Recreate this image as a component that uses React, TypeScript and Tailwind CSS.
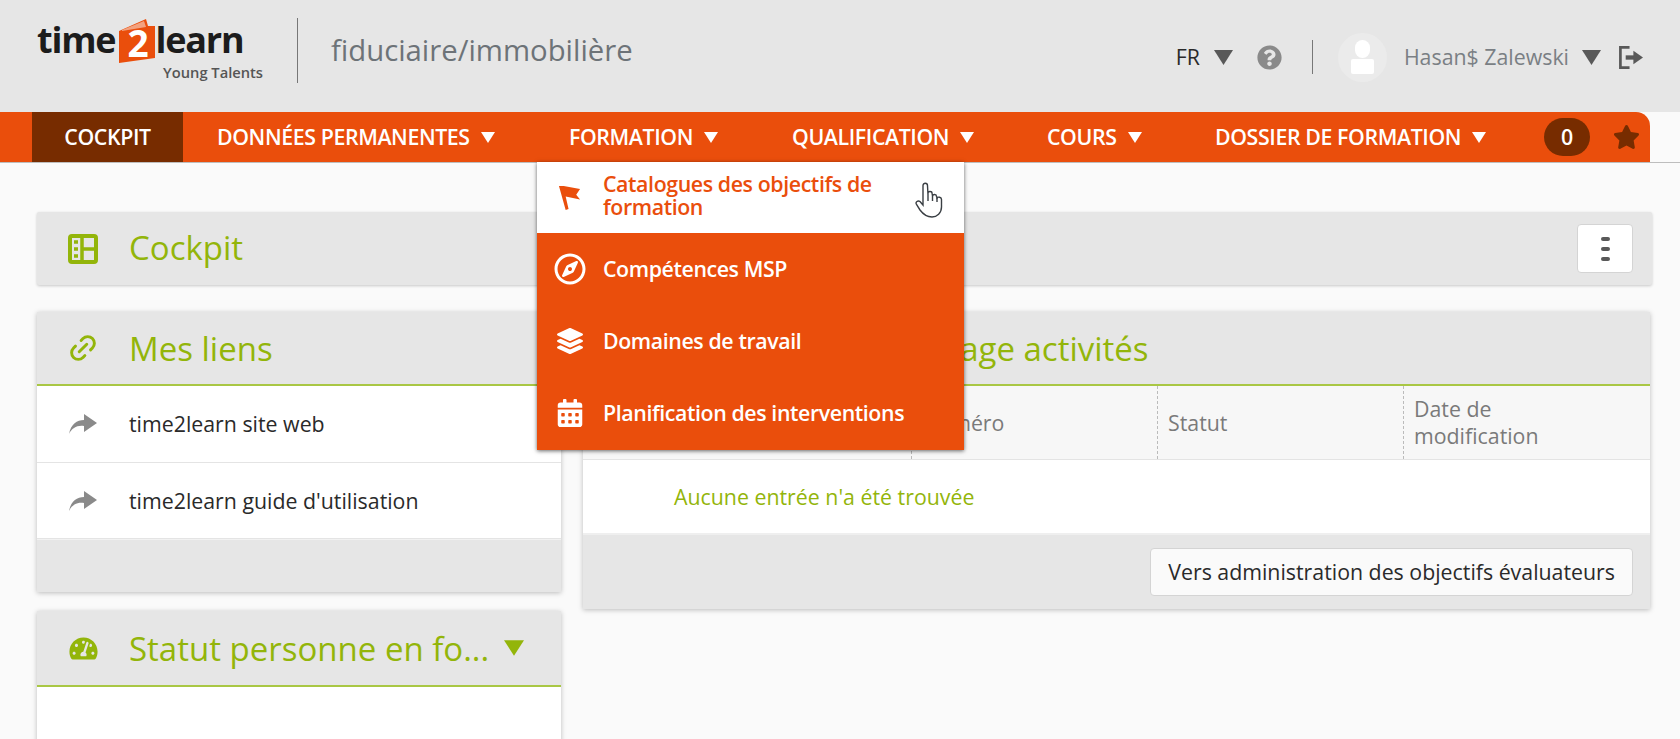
import { FaCalendarAlt, FaLayerGroup, FaQuestionCircle, FaRegCompass, FaStar, FaTachometerAlt } from "react-icons/fa";
import { Link2 } from "lucide-react";

const navItems = [
  { label: "DONNÉES PERMANENTES", width: "w-[353px]", pad: "pl-[34px]" },
  { label: "FORMATION", width: "w-[222px]", pad: "pl-[33px]" },
  { label: "QUALIFICATION", width: "w-[255px]", pad: "pl-[34px]" },
  { label: "COURS", width: "w-[202px]", pad: "pl-[34px]" },
  { label: "DOSSIER DE FORMATION", width: "w-[329px]", pad: "pl-[0px]" },
];

function Caret({ className }: { className: string }) {
  return (
    <svg viewBox="0 0 14 11" className={className} fill="currentColor">
      <path d="M0 0h14L7 11z" />
    </svg>
  );
}

function Logo() {
  return (
    <div className="flex w-[226px] flex-col items-end pt-[16px]">
      <div className="flex h-[47px] items-center self-start text-[36px] font-bold leading-none tracking-[-1.2px] text-[#1c1c1c]">
        <span>time</span>
        <svg viewBox="0 0 38 46" className="ml-[3px] h-[46px] w-[38px]">
          <path d="M1 14 L28 2 L30 9 L37 9 L37 41 L1 46 z" fill="#ea4e0c" />
          <path d="M4 13 L26 4 L28 10 L4 14 z" fill="#f3a27f" />
        </svg>
        <span className="-ml-[34px] mr-[3px] mt-[5px] w-[30px] text-center text-[37px] text-white">2</span>
        <span>learn</span>
      </div>
      <div className="text-[14.7px] font-semibold leading-[18px] text-[#555]">Young Talents</div>
    </div>
  );
}

function CockpitIcon() {
  return (
    <svg viewBox="0 0 30 30" className="h-[30px] w-[30px] text-[#93b50a]" fill="none" stroke="currentColor">
      <rect x="2" y="2" width="26" height="26" rx="2" strokeWidth="4" />
      <path d="M14 2v26M14 15h14" strokeWidth="3.5" />
      <path d="M6 8h4M6 15h4M6 22h4" strokeWidth="3.5" />
    </svg>
  );
}

function LogoutIcon() {
  return (
    <svg viewBox="0 0 26 26" className="h-[25px] w-[25px] text-[#595959]" fill="none" stroke="currentColor" strokeWidth="2.8">
      <path d="M12 2.5H2.5v21H12" />
      <path d="M8 13h9" strokeWidth="4.5" />
      <path d="M16 6l10 7-10 7z" fill="currentColor" stroke="none" />
    </svg>
  );
}

function ShareIcon() {
  return (
    <svg viewBox="0 0 28 20" className="h-[20px] w-[28px] text-[#8a8a8a]" fill="currentColor">
      <path d="M0 20C2 10 8 6 15 6V0L28 9L15 18V12C8 11 3 14 0 20z" />
    </svg>
  );
}

function HandCursor() {
  return (
    <svg viewBox="0 0 28 36" className="absolute left-[378px] top-[20px] h-[36px] w-[28px] text-[#3a3f44]" fill="#fff" stroke="currentColor" strokeWidth="1.4">
      <path d="M8 20V3.5C8 .5 12.5 .5 12.5 3.5L13 13V11C13 9 17 9 17 11L17.5 14C18 12 21.5 12 21.5 14.5L22 16C23 14.5 26.5 15 26.5 17.5V25C26.5 31 22 35 17 35C11 35 8 32 5 28L1.5 22.5C0 20 3 18 5 19.5L8 23z" />
      <path d="M13 13V19M17.5 14V19M22 16V20" fill="none" />
    </svg>
  );
}

function PanelHeader({
  icon,
  title,
  trailing,
  slot = "w-[92px]",
  height = "h-[74px]",
}: {
  icon: React.ReactNode;
  title: string;
  trailing?: React.ReactNode;
  slot?: string;
  height?: string;
}) {
  return (
    <div className={`flex items-center border-b-2 border-[#a9c744] bg-[#e6e6e6] ${height}`}>
      <div className={`flex shrink-0 justify-center ${slot}`}>{icon}</div>
      <h2 className="whitespace-nowrap pt-[2px] text-[33px] font-normal leading-[44px] text-[#93b50a]">{title}</h2>
      {trailing}
    </div>
  );
}

function LinkRow({ label, height }: { label: string; height: string }) {
  return (
    <div className={`flex items-center border-b border-[#e4e4e4] bg-white ${height}`}>
      <div className="flex w-[92px] justify-center">
        <ShareIcon />
      </div>
      <span className="text-[21.33px] text-[#2a2a2a]">{label}</span>
    </div>
  );
}

function MenuItem({ icon, label }: { icon: React.ReactNode; label: string }) {
  return (
    <div className="flex h-[72px] items-center text-white">
      <div className="flex w-[66px] shrink-0 justify-center">{icon}</div>
      <span className="text-[21.33px] font-semibold tracking-[-0.4px]">{label}</span>
    </div>
  );
}

export default function App() {
  return (
    <div className="relative h-[739px] overflow-hidden bg-[#fafafa] font-['Open_Sans',sans-serif]">
      <header className="flex h-[112px] bg-[#e6e6e6] pl-[37px]">
        <Logo />
        <div className="ml-[34px] mt-[18px] h-[65px] w-px bg-[#777]" />
        <div className="ml-[33px] mt-[30px] text-[29.3px] leading-[40px] text-[#6d7378]">fiduciaire/immobilière</div>
        <div className="ml-auto mr-[37px] mt-[32px] flex h-[50px] items-center">
          <span className="text-[21.33px] text-[#2a2a2a]">FR</span>
          <Caret className="ml-[14px] h-[15px] w-[19px] text-[#595959]" />
          <FaQuestionCircle className="ml-[24px] h-[25px] w-[25px] text-[#8a8a8a]" />
          <div className="ml-[30px] h-[34px] w-px bg-[#777]" />
          <div className="ml-[25px] flex h-[49px] w-[49px] flex-col items-center justify-center rounded-full bg-[#ebebeb]">
            <div className="h-[18px] w-[15px] rounded-full bg-white" />
            <div className="mt-[1px] h-[15px] w-[23px] rounded-[2px] bg-white" />
          </div>
          <span className="ml-[17px] text-[21.33px] text-[#7a7f84]">Hasan$ Zalewski</span>
          <Caret className="ml-[13px] h-[15px] w-[19px] text-[#595959]" />
          <div className="ml-[17px]"><LogoutIcon /></div>
        </div>
      </header>

      <div className="border-b border-[#bdbdbd]">
        <nav className="flex h-[50px] w-[1650px] items-center rounded-tr-[14px] bg-[#ea4e0c] pl-[32px] text-white">
          <div className="flex h-full w-[151px] items-center justify-center bg-[#772c00] text-[21.33px] font-semibold tracking-[-0.4px]">COCKPIT</div>
          {navItems.map((item) => (
            <div key={item.label} className={`flex h-full items-center ${item.width} ${item.pad}`}>
              <span className="whitespace-nowrap text-[21.33px] font-semibold tracking-[-0.4px]">{item.label}</span>
              <Caret className="ml-[11px] h-[11px] w-[14px]" />
            </div>
          ))}
          <div className="flex h-[38px] w-[46px] items-center justify-center rounded-full bg-[#772c00] text-[21.33px] font-semibold">0</div>
          <FaStar className="ml-[23px] h-[26px] w-[27px] text-[#772c00]" />
        </nav>
      </div>

      <main className="flex flex-col gap-[27px] pl-[37px] pr-[28px] pt-[49px]">
        <section className="flex h-[73px] items-center rounded-[2px] bg-[#e6e6e6] shadow-[0_1px_3px_rgba(0,0,0,0.2)]">
          <div className="flex w-[92px] justify-center"><CockpitIcon /></div>
          <h1 className="pb-[1px] text-[33px] font-normal leading-[44px] text-[#93b50a]">Cockpit</h1>
          <button className="ml-auto mr-[19px] flex h-[49px] w-[56px] flex-col items-center justify-center gap-[6px] rounded-[4px] border border-[#d4d4d4] bg-white">
            <span className="h-[4px] w-[9px] rounded-[2px] bg-[#595959]" />
            <span className="h-[4px] w-[9px] rounded-[2px] bg-[#595959]" />
            <span className="h-[4px] w-[9px] rounded-[2px] bg-[#595959]" />
          </button>
        </section>

        <div className="grid grid-cols-[524px_1067px] gap-x-[22px]">
          <div className="flex flex-col gap-[19px]">
            <section className="shadow-[0_1px_5px_rgba(0,0,0,0.25)]">
              <PanelHeader icon={<Link2 className="h-[32px] w-[32px] -rotate-45 text-[#93b50a]" strokeWidth={2.2} />} title="Mes liens" />
              <LinkRow label="time2learn site web" height="h-[77px]" />
              <LinkRow label="time2learn guide d'utilisation" height="h-[76px]" />
              <div className="h-[53px] border-t border-[#f2f2f2] bg-[#e6e6e6]" />
            </section>
            <section className="shadow-[0_1px_5px_rgba(0,0,0,0.25)]">
              <PanelHeader
                icon={<FaTachometerAlt className="h-[25px] w-[29px] text-[#93b50a]" />}
                title="Statut personne en fo..."
                height="h-[76px]"
                trailing={<Caret className="ml-[15px] h-[16px] w-[20px] shrink-0 text-[#93b50a]" />}
              />
              <div className="h-[200px] bg-white" />
            </section>
          </div>

          <section className="self-start shadow-[0_1px_5px_rgba(0,0,0,0.25)]">
            <PanelHeader icon={<Link2 className="h-[30px] w-[30px] text-[#93b50a]" />} title="Pilotage activités" slot="w-[309px]" />
            <div className="grid h-[74px] grid-cols-[328px_246px_246px_1fr] border-b border-[#e4e4e4] bg-[#f7f7f7] text-[21.33px] leading-[27px] text-[#7a7a7a]">
              <div />
              <div className="flex items-center border-l border-dashed border-[#bbb] pl-[10px]">Numéro</div>
              <div className="flex items-center border-l border-dashed border-[#bbb] pl-[10px]">Statut</div>
              <div className="flex items-center border-l border-dashed border-[#bbb] pb-[2px] pl-[10px]">Date de<br />modification</div>
            </div>
            <div className="flex h-[75px] items-center border-b-2 border-[#efefef] bg-white pl-[91px] text-[21.33px] text-[#93b50a]">Aucune entrée n'a été trouvée</div>
            <div className="flex h-[74px] items-center justify-end bg-[#e6e6e6] pr-[17px]">
              <button className="h-[48px] rounded-[4px] border border-[#d4d4d4] bg-[#fafafa] px-[17px] text-[21.33px] text-[#2a2a2a]">Vers administration des objectifs évaluateurs</button>
            </div>
          </section>
        </div>
      </main>

      <div className="absolute left-[537px] top-[162px] w-[427px] bg-[#ea4e0c] shadow-[0_1px_4px_rgba(0,0,0,0.6)]">
        <div className="relative flex h-[71px] items-center bg-white text-[#ea4e0c]">
          <div className="flex w-[66px] shrink-0 justify-center pr-[2px]">
            <svg viewBox="0 0 24 26" className="h-[25px] w-[23px]" fill="currentColor">
              <path d="M1 1H6L23 4L19 10L23 15L8 12L11 25L8 26z" />
            </svg>
          </div>
          <span className="-mt-[4px] w-[310px] text-[21.33px] font-semibold leading-[22.5px] tracking-[-0.4px]">Catalogues des objectifs de formation</span>
          <HandCursor />
        </div>
        <MenuItem icon={<FaRegCompass className="h-[32px] w-[32px]" />} label="Compétences MSP" />
        <MenuItem icon={<FaLayerGroup className="h-[26px] w-[26px]" />} label="Domaines de travail" />
        <div className="h-[73px]">
          <MenuItem icon={<FaCalendarAlt className="h-[28px] w-[26px]" />} label="Planification des interventions" />
        </div>
      </div>
    </div>
  );
}
